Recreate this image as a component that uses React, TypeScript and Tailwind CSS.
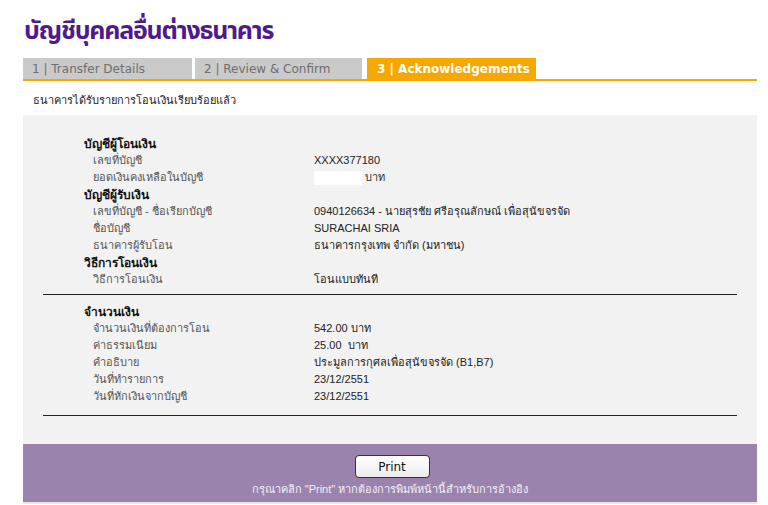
const sections = [
  {
    title: "บัญชีผู้โอนเงิน",
    rows: [
      { label: "เลขที่บัญชี", value: "XXXX377180" },
      { label: "ยอดเงินคงเหลือในบัญชี", value: "balance" },
    ],
  },
  {
    title: "บัญชีผู้รับเงิน",
    rows: [
      { label: "เลขที่บัญชี - ชื่อเรียกบัญชี", value: "0940126634 - นายสุรชัย ศรีอรุณลักษณ์ เพื่อสุนัขจรจัด" },
      { label: "ชื่อบัญชี", value: "SURACHAI SRIA" },
      { label: "ธนาคารผู้รับโอน", value: "ธนาคารกรุงเทพ จำกัด (มหาชน)" },
    ],
  },
  {
    title: "วิธีการโอนเงิน",
    rows: [{ label: "วิธีการโอนเงิน", value: "โอนแบบทันที" }],
  },
];

const amount = [
  { label: "จำนวนเงินที่ต้องการโอน", value: "542.00 บาท" },
  { label: "ค่าธรรมเนียม", value: "25.00  บาท" },
  { label: "คำอธิบาย", value: "ประมูลการกุศลเพื่อสุนัขจรจัด (B1,B7)" },
  { label: "วันที่ทำรายการ", value: "23/12/2551" },
  { label: "วันที่หักเงินจากบัญชี", value: "23/12/2551" },
];

function Row({ label, value }: { label: string; value: string }) {
  return (
    <div className="flex h-[17px] items-center">
      <div className="w-[230px] pl-[9px] text-[11px] text-[#555]">{label}</div>
      {value === "balance" ? (
        <div className="flex items-center">
          <span className="h-[14px] w-[48px] bg-white" />
          <span className="ml-[3px] text-[11px] text-[#333]">บาท</span>
        </div>
      ) : (
        <div className="whitespace-pre text-[11px] text-[#222]">{value}</div>
      )}
    </div>
  );
}

function Heading({ children }: { children: string }) {
  return (
    <div className="flex h-[17px] items-center text-[12px] font-bold text-[#111]">{children}</div>
  );
}

export default function App() {
  return (
    <div className="h-[505px] w-[768px] bg-white font-['Liberation_Sans','Noto_Sans',sans-serif]">
      <div className="w-[757px] pl-[23px] pt-[12px]">
        <h1 className="h-[36px] pl-[1px] font-['Noto_Sans_Thai','Liberation_Sans',sans-serif] text-[25px] font-bold leading-[38px] tracking-[-1.2px] text-[#4f1b8a]">
          บัญชีบุคคลอื่นต่างธนาคาร
        </h1>
        <div className="mt-[10px] flex h-[23px] border-b-2 border-[#f6a800] font-['DejaVu_Sans',sans-serif] text-[12px]">
          <div className="flex w-[169px] items-center bg-[#cacaca] pl-[9px] text-[#6e6e6e]">1 | Transfer Details</div>
          <div className="ml-[3px] flex w-[167px] items-center bg-[#cacaca] pl-[9px] text-[#6e6e6e]">2 | Review &amp; Confirm</div>
          <div className="ml-[5px] flex w-[169px] items-center bg-[#f6a800] pl-[10px] font-bold text-white">3 | Acknowledgements</div>
        </div>
        <p className="h-[34px] pl-[10px] text-[11px] leading-[38px] text-[#222]">ธนาคารได้รับรายการโอนเงินเรียบร้อยแล้ว</p>
        <div className="bg-[#f2f2f2] px-[20px] pb-[28px] pt-[20px]">
          <div className="pl-[41px]">
            {sections.map((s) => (
              <div key={s.title}>
                <Heading>{s.title}</Heading>
                {s.rows.map((r) => (
                  <Row key={r.label} {...r} />
                ))}
              </div>
            ))}
          </div>
          <div className="mt-[6px] border-t border-[#222]" />
          <div className="pl-[41px] pt-[8px]">
            <Heading>จำนวนเงิน</Heading>
            {amount.map((r) => (
              <Row key={r.label} {...r} />
            ))}
          </div>
          <div className="mt-[10px] border-t border-[#222]" />
        </div>
        <div className="flex h-[58px] flex-col items-center bg-[#9a84ae] pt-[11px]">
          <button
            type="button"
            className="ml-[4px] h-[23px] w-[75px] rounded-[4px] border border-[#333] bg-gradient-to-b from-white to-[#ececec] font-['DejaVu_Sans',sans-serif] text-[12px] text-[#111]"
          >
            Print
          </button>
          <p className="mt-[3px] text-[11px] text-[#f3eef7]">
            กรุณาคลิก "Print" หากต้องการพิมพ์หน้านี้สำหรับการอ้างอิง
          </p>
        </div>
        <div className="h-[2px] bg-[#e8e8e8]" />
      </div>
    </div>
  );
}
